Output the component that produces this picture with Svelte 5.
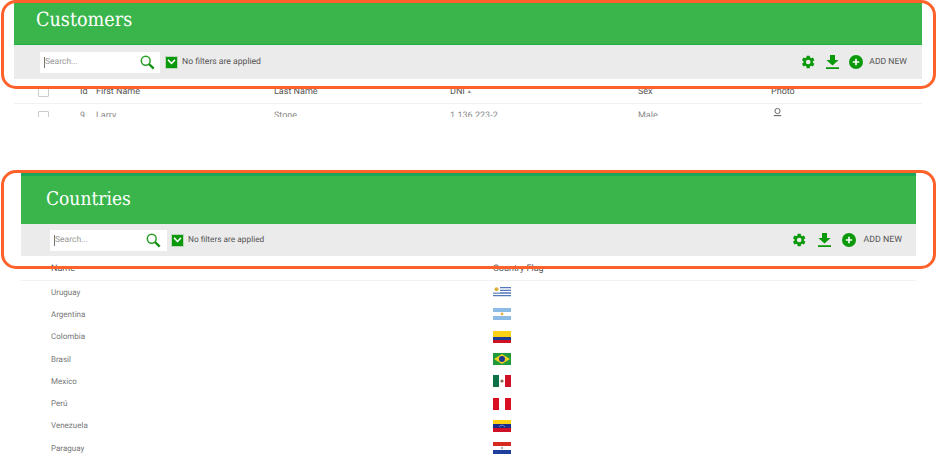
<script>
	const customerCols = ['First Name', 'Last Name', 'DNI', 'Sex', 'Photo'];
	const countries = ['Uruguay', 'Argentina', 'Colombia', 'Brasil', 'Mexico', 'Perú', 'Venezuela', 'Paraguay'];
</script>

{#snippet toolbar(kind)}
	<div class="toolbar {kind}">
		<div class="search">
			<span class="placeholder">Search...</span>
			<svg class="glass" width="15" height="15" viewBox="0 0 17 17">
				<circle cx="6.5" cy="6.5" r="5" fill="none" stroke="#2a9d2a" stroke-width="1.7" />
				<path d="M10.2 10.2 L15.5 15.5" stroke="#119211" stroke-width="2.6" />
			</svg>
		</div>
		<span class="check">
			<svg width="9" height="6" viewBox="0 0 10 7"><path d="M1 1 L5 5.2 L9 1" fill="none" stroke="#fff" stroke-width="1.8" /></svg>
		</span>
		<span class="filters">No filters are applied</span>
		<div class="actions">
			<svg class="gear" width="16" height="16" viewBox="0 0 24 24">
				<path fill="#0a990a" d="M19.4 13a7.5 7.5 0 0 0 0-2l2.3-1.8-2.3-3.9-2.7 1.1a7.5 7.5 0 0 0-1.7-1L14.6 2.5h-4.6L9.6 5.4a7.5 7.5 0 0 0-1.7 1L5.2 5.3 2.9 9.2 5.2 11a7.5 7.5 0 0 0 0 2l-2.3 1.8 2.3 3.9 2.7-1.1a7.5 7.5 0 0 0 1.7 1l.4 2.9h4.6l.4-2.9a7.5 7.5 0 0 0 1.7-1l2.7 1.1 2.3-3.9zM12.3 15.5a3.5 3.5 0 1 1 0-7 3.5 3.5 0 0 1 0 7z" />
			</svg>
			<svg class="down" width="13" height="14" viewBox="0 0 13 14">
				<path fill="#0a990a" d="M4 0h5v5h3.6L6.5 10.6 .4 5H4zM0 12.2h13V14H0z" />
			</svg>
			<svg class="plus" width="14" height="14" viewBox="0 0 14 14">
				<circle cx="7" cy="7" r="7" fill="#0a990a" />
				<path d="M7 3.8v6.4M3.8 7h6.4" stroke="#fff" stroke-width="1.6" />
			</svg>
			<span class="add">ADD NEW</span>
		</div>
	</div>
{/snippet}

{#snippet flag(name)}
	<svg class="flag" width="18" height="12" viewBox="0 0 18 12">
		{#if name === 'Uruguay'}
			<rect width="18" height="12" fill="#fff" />
			<path d="M0 1.7h18M0 4.3h18M0 7h18M0 9.7h18" stroke="#5577bb" stroke-width="1.3" />
			<rect width="7" height="6.5" fill="#fff" />
			<circle cx="3.5" cy="3.2" r="2" fill="#d8b040" />
		{:else if name === 'Argentina'}
			<rect width="18" height="12" fill="#fff" />
			<rect width="18" height="4" fill="#8cbce6" />
			<rect y="8" width="18" height="4" fill="#8cbce6" />
			<circle cx="9" cy="6" r="1.4" fill="#e6b04a" />
		{:else if name === 'Colombia'}
			<rect width="18" height="6" fill="#fcd116" />
			<rect y="6" width="18" height="3" fill="#1c3f94" />
			<rect y="9" width="18" height="3" fill="#ce1126" />
		{:else if name === 'Brasil'}
			<rect width="18" height="12" fill="#1f9a3a" />
			<path d="M9 1 L17 6 L9 11 L1 6z" fill="#f0d020" />
			<circle cx="9" cy="6" r="3" fill="#1c3a8c" />
		{:else if name === 'Mexico'}
			<rect width="6" height="12" fill="#0f7048" />
			<rect x="6" width="6" height="12" fill="#fff" />
			<rect x="12" width="6" height="12" fill="#ce1126" />
			<circle cx="9" cy="6" r="1.6" fill="#8a6a4a" />
		{:else if name === 'Perú'}
			<rect width="6" height="12" fill="#d91023" />
			<rect x="6" width="6" height="12" fill="#fff" />
			<rect x="12" width="6" height="12" fill="#d91023" />
		{:else if name === 'Venezuela'}
			<rect width="18" height="4" fill="#fcd116" />
			<rect y="4" width="18" height="4" fill="#1a2c8c" />
			<rect y="8" width="18" height="4" fill="#ce1126" />
			<path d="M6 7 A3.4 3.4 0 0 1 12 7" fill="none" stroke="#8a9ad0" stroke-width=".8" />
		{:else}
			<rect width="18" height="4" fill="#d52b1e" />
			<rect y="4" width="18" height="4" fill="#fff" />
			<rect y="8" width="18" height="4" fill="#1f3f9c" />
			<circle cx="9" cy="6" r="1.2" fill="#b0b8b0" />
		{/if}
	</svg>
{/snippet}

<div class="page">
	<section class="panel customers">
		<header class="title"><h1>Customers</h1></header>
		{@render toolbar('small')}
		<div class="row head">
			<span class="c-check"><i class="box"></i></span>
			<span class="c-id">Id</span>
			{#each customerCols as col}
				<span class="c-col">{col}{#if col === 'DNI'}<em class="sort">▲</em>{/if}</span>
			{/each}
		</div>
		<div class="row body">
			<span class="c-check"><i class="box"></i></span>
			<span class="c-id">9</span>
			<span class="c-col">Larry</span>
			<span class="c-col">Stone</span>
			<span class="c-col">1.136.223-2</span>
			<span class="c-col">Male</span>
			<span class="c-col">
				<svg class="user" width="9" height="9" viewBox="0 0 9 9">
					<circle cx="4.5" cy="3" r="2.6" fill="none" stroke="#666" stroke-width="1" />
					<path d="M.8 7.6h7.4" stroke="#666" stroke-width="1.1" />
				</svg>
			</span>
		</div>
	</section>

	<section class="panel countries">
		<header class="title"><h1>Countries</h1></header>
		{@render toolbar('large')}
		<div class="list-head">
			<span class="name">Name</span>
			<span>Country Flag</span>
		</div>
		{#each countries as country}
			<div class="list-row">
				<span class="name">{country}</span>
				{@render flag(country)}
			</div>
		{/each}
	</section>

	<div class="ring ring-top"></div>
	<div class="ring ring-bottom"></div>
</div>

<style>
	:global(body) {
		margin: 0;
		background: #fff;
	}
	.page {
		position: relative;
		width: 938px;
		height: 457px;
		overflow: hidden;
		font-family: Roboto, "Liberation Sans", sans-serif;
		color: #666;
		text-rendering: geometricPrecision;
	}
	.panel {
		overflow: hidden;
	}
	.customers {
		margin: 0 16px 0 14px;
		height: 117px;
	}
	.countries {
		margin: 56px 22px 0 21px;
		height: 284px;
	}
	.title {
		background: #3ab54c;
		display: flex;
		align-items: center;
		box-sizing: border-box;
	}
	.customers .title {
		height: 45px;
		padding: 0 0 5px 22px;
		border-bottom: 1px solid #22ad44;
	}
	.countries .title {
		height: 51px;
		padding: 0 0 2px 25px;
		border-top: 3px solid #1aa558;
	}
	h1 {
		margin: 0;
		color: #fff;
		font-family: "DejaVu Serif Condensed", "DejaVu Serif", serif;
		font-weight: 400;
		font-size: 19.6px;
		line-height: 1;
	}
	.countries h1 {
		font-size: 19px;
	}
	.toolbar {
		background: #ebebeb;
		display: flex;
		align-items: center;
	}
	.toolbar.small {
		height: 34px;
		padding: 0 15px 0 26px;
	}
	.toolbar.large {
		height: 32px;
		padding: 0 14px 0 29px;
	}
	.search {
		background: #fff;
		display: flex;
		align-items: center;
		justify-content: space-between;
		box-sizing: border-box;
		height: 21px;
		width: 120px;
		padding: 0 5px 0 4px;
	}
	.large .search {
		width: 117px;
		padding-right: 6px;
	}
	.placeholder {
		font-size: 8.5px;
		color: #9a9a9a;
		border-left: 1px solid #777;
		line-height: 11px;
	}
	.check {
		margin-left: 5px;
		width: 11px;
		height: 11px;
		background: #0a990a;
		border: 1px solid #bcd8bc;
		display: flex;
		align-items: center;
		justify-content: center;
	}
	.large .check {
		margin-left: 4px;
	}
	.filters {
		margin-left: 4px;
		font-size: 8.6px;
		color: #555;
	}
	.large .filters {
		font-size: 8.3px;
	}
	.actions {
		margin-left: auto;
		display: flex;
		align-items: center;
	}
	.down {
		margin-left: 10px;
	}
	.plus {
		margin-left: 10px;
	}
	.large .down {
		margin-left: 11px;
	}
	.large .plus {
		margin-left: 11px;
	}
	.add {
		margin-left: 6px;
		font-size: 8.6px;
		color: #555;
	}
	.large .add {
		margin-left: 7px;
		font-size: 8.8px;
	}
	.row {
		display: grid;
		grid-template-columns: 66px 16px 178px 176px 188px 133px 1fr;
		align-items: center;
		font-size: 9px;
	}
	.row.head {
		height: 24px;
		border-bottom: 1px solid #f1f1f1;
		color: #555;
	}
	.row.head .c-col,
	.row.head .c-id {
		padding-top: 2px;
	}
	.row.body {
		height: 24px;
		color: #8a8a8a;
	}
	.c-check {
		padding-left: 24px;
		display: flex;
	}
	.box {
		width: 9px;
		height: 9px;
		border: 1px solid #ccc;
		border-radius: 1px;
	}
	.sort {
		font-style: normal;
		font-size: 5px;
		margin-left: 2px;
		color: #888;
		vertical-align: 1px;
	}
	.user {
		display: block;
		margin-top: -8px;
		margin-left: 2px;
	}
	.list-head {
		height: 24px;
		display: grid;
		grid-template-columns: 472px 1fr;
		align-items: center;
		font-size: 9px;
		color: #555;
		border-bottom: 1px solid #f1f1f1;
	}
	.list-head span {
		padding-top: 2px;
	}
	.list-row {
		height: 22.3px;
		display: grid;
		grid-template-columns: 472px 1fr;
		align-items: center;
		font-size: 8px;
		color: #777;
	}
	.name {
		padding-left: 30px;
	}
	.flag {
		display: block;
	}
	.ring {
		position: absolute;
		box-sizing: border-box;
		border: 3px solid #ff612b;
		border-radius: 15px;
		pointer-events: none;
	}
	.ring-top {
		left: 1px;
		top: 0;
		width: 935px;
		height: 89px;
	}
	.ring-bottom {
		left: 1px;
		top: 170px;
		width: 935px;
		height: 99px;
	}
</style>
